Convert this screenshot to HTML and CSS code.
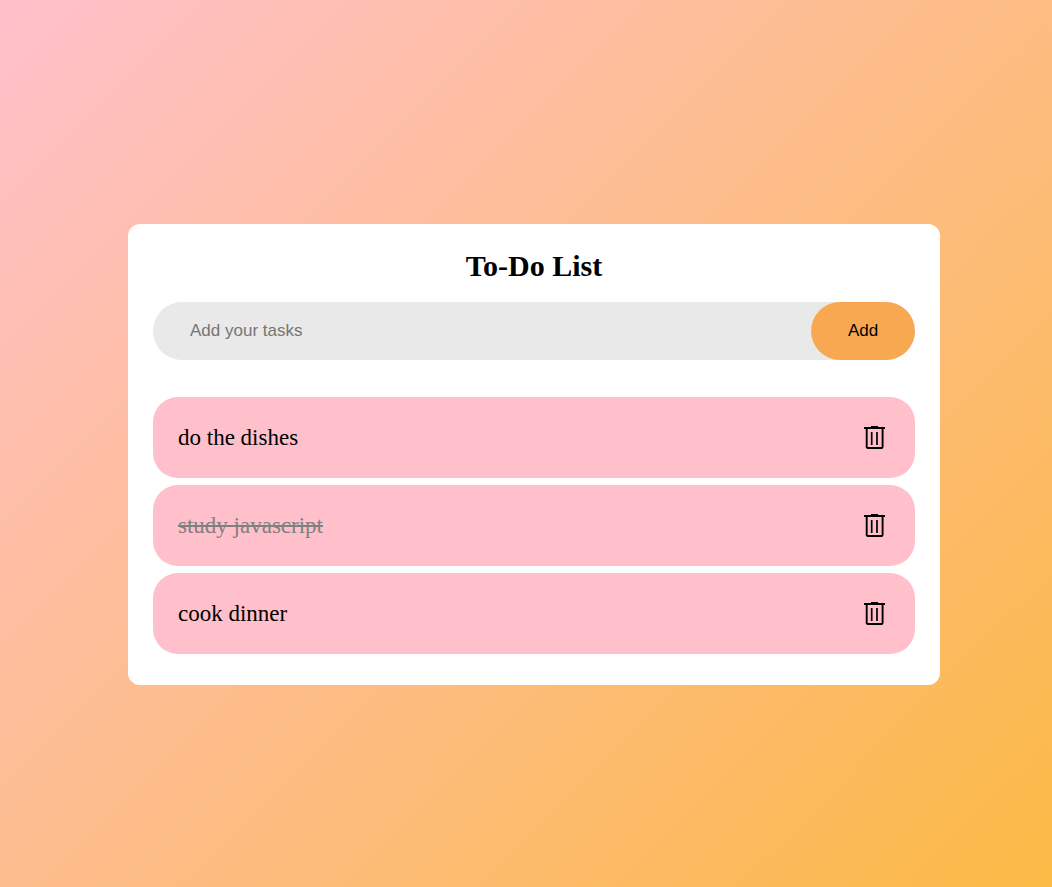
FILE: index.html
```
<!DOCTYPE html>
<html lang="en">
<head>
<meta charset="utf-8">
<meta name="viewport" content="width=device-width, initial-scale=1">
<title>To-Do List</title>
<link rel="stylesheet" href="styles.css">
</head>
<body>
<svg class="symbols" aria-hidden="true">
  <symbol id="trash" viewBox="0 0 21 23">
    <path d="M0 1H7V0H14V1H21V3H0Z" fill="currentColor"/>
    <path d="M2.700 3V21.200L3.500 22H17.800L18.600 21.200V3" fill="none" stroke="currentColor" stroke-width="1.900"/>
    <path d="M7.700 6V19M13 6V19" fill="none" stroke="currentColor" stroke-width="1.700"/>
  </symbol>
</svg>
<main class="card">
  <h1 class="title">To-Do List</h1>
  <form class="entry">
    <input class="entry-input" type="text" placeholder="Add your tasks" aria-label="New task">
    <button class="entry-button" type="button">Add</button>
  </form>
  <ul class="tasks">
    <li class="task"><span>do the dishes</span><button class="remove" type="button" aria-label="Delete do the dishes"><svg class="icon"><use href="#trash"/></svg></button></li>
    <li class="task"><span class="done">study javascript</span><button class="remove" type="button" aria-label="Delete study javascript"><svg class="icon"><use href="#trash"/></svg></button></li>
    <li class="task"><span>cook dinner</span><button class="remove" type="button" aria-label="Delete cook dinner"><svg class="icon"><use href="#trash"/></svg></button></li>
  </ul>
</main>
</body>
</html>
```
FILE: styles.css
```
* {
  box-sizing: border-box;
}

body {
  margin: 0;
  min-height: 100vh;
  padding: 24px 112px 2px 128px;
  display: flex;
  align-items: center;
  background: linear-gradient(135deg, #ffc0cb, #fbb945);
  font-family: "Liberation Serif", "Times New Roman", serif;
  color: #000;
}

.symbols {
  position: absolute;
  width: 0;
  height: 0;
}

.card {
  flex: 1;
  padding: 25px 25px 31px;
  border-radius: 12px;
  background: #fff;
}

.title {
  margin: 0 0 19px;
  font-size: 30px;
  line-height: 34px;
  text-align: center;
}

.entry {
  display: flex;
  height: 58px;
  margin-bottom: 37px;
  border-radius: 29px;
  background: #e9e9e9;
}

.entry-input,
.entry-button {
  border: 0;
  font-family: "Liberation Sans", Arial, sans-serif;
  font-size: 17px;
}

.entry-input {
  flex: 1;
  min-width: 0;
  padding: 0 37px;
  background: transparent;
  outline: 0;
}

.entry-button {
  width: 104px;
  border-radius: 29px;
  background: #f9a852;
  color: #000;
}

.tasks {
  display: grid;
  gap: 7px;
  margin: 0;
  padding: 0;
  list-style: none;
}

.task {
  display: flex;
  justify-content: space-between;
  align-items: center;
  min-height: 81px;
  padding: 0 30px 0 25px;
  border-radius: 25px;
  background: #ffc0cb;
  font-size: 23px;
}

.done {
  color: #808080;
  text-decoration: line-through;
}

.remove {
  display: flex;
  padding: 0;
  border: 0;
  background: none;
  color: #000;
}

.icon {
  width: 21px;
  height: 23px;
}
```
